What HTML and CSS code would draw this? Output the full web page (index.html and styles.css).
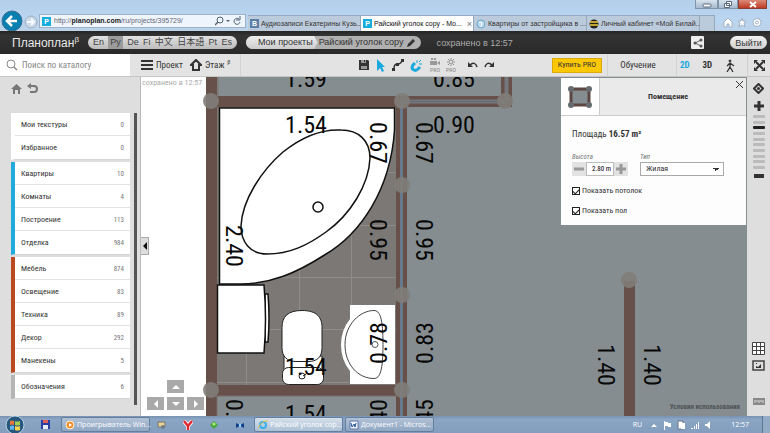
FILE: index.html
```html
<!DOCTYPE html>
<html lang="ru">
<head>
<meta charset="utf-8">
<title>Райский уголок copy</title>
<link rel="stylesheet" href="styles.css">
</head>
<body>
<div class="browser">
  <div class="titlebar">
    <button class="win" aria-label="Свернуть"><svg width="21" height="9"><rect x="7" y="4" width="8" height="3" rx="1" fill="#fff" stroke="#58697d"/></svg></button>
    <button class="win" aria-label="Окно"><svg width="18" height="9"><path d="M7.500 1.500h5v4h-5z M5.500 3.500h5v4h-5z" fill="#fff" stroke="#58697d"/></svg></button>
    <button class="win win-close" aria-label="Закрыть"><svg width="27" height="9"><path d="M11 2l6 5M17 2l-6 5" stroke="#fff" stroke-width="2"/></svg></button>
  </div>
  <div class="navrow">
    <button class="back" aria-label="Назад"><svg width="22" height="22" viewBox="0 0 22 22"><circle cx="11" cy="11" r="10" fill="#087fae" stroke="#386d95"/><path d="M16 11H7M11 6l-5 5 5 5" fill="none" stroke="#fff" stroke-width="2.500"/></svg></button>
    <button class="forward" aria-label="Вперёд"><svg width="14" height="14" viewBox="0 0 14 14"><circle cx="7" cy="7" r="6" fill="#c9d9ea" stroke="#9daec1"/><path d="M3 7h7M7 4l3 3-3 3" fill="none" stroke="#f7fbff" stroke-width="2"/></svg></button>
    <div class="address"><span class="fav">P</span><span class="url">http://<b>planoplan.com</b>/ru/projects/395729/</span>
      <svg width="27" height="10" viewBox="0 0 27 10"><circle cx="5" cy="4" r="3" fill="none" stroke="#4e6073"/><path d="M3 6L0 9" stroke="#4e6073" stroke-width="1.500"/><path d="M11 4h4l-2 2z" fill="#4e6073"/><path d="M24 3a3 3 0 1 0 1 3M25 0v4h-4" fill="none" stroke="#4e6073"/></svg>
    </div>
    <nav class="tabs">
      <a class="tab" href="#"><span class="fav fav-b">B</span><span class="tab-name">Аудиозаписи Екатерины Кузь...</span></a>
      <a class="tab tab-on" href="#"><span class="fav">P</span><span class="tab-name">Райский уголок copy - Mo...</span><span class="x">×</span></a>
      <a class="tab" href="#"><svg width="10" height="10"><circle cx="5" cy="5" r="4" fill="#b8d8ee" stroke="#6da8cf"/><path d="M3 3l3 1-1 4" stroke="#fff" fill="none"/></svg><span class="tab-name">Квартиры от застройщика в ...</span></a>
      <a class="tab" href="#"><svg width="10" height="10"><circle cx="5" cy="5" r="4.500" fill="#222"/><path d="M1 3h8M1 6h8" stroke="#f3cf38" stroke-width="1.500"/></svg><span class="tab-name">Личный кабинет «Мой Билай...</span></a>
      <span class="newtab"></span>
    </nav>
    <div class="chrome-icons">
      <svg width="40" height="11" viewBox="0 0 40 11" fill="#fff" stroke="#a2b2c4"><path d="M1 5l4-4 4 4v5H6V7H4v3H1z"/><path d="M19 1l1 3h3l-2 2 1 4-3-2-3 2 1-4-2-2h3z"/><circle cx="34" cy="5.500" r="4"/><circle cx="34" cy="5.500" r="1.500"/></svg>
    </div>
  </div>
</div>

<header class="header">
  <a class="logo" href="#">Планоплан<sup>β</sup></a>
  <nav class="langs"><a href="#">En</a><a class="lang-on" href="#">Ру</a><a href="#">De</a><a href="#">Fi</a><a href="#">中文</a><a href="#">日本語</a><a href="#">Pt</a><a href="#">Es</a></nav>
  <nav class="crumbs"><a class="crumb" href="#">Мои проекты</a><a class="crumb-now" href="#">Райский уголок copy <svg width="8" height="8"><path d="M0 8l1-3 5-5 2 2-5 5z" fill="#333"/></svg></a></nav>
  <span class="saved">сохранено в 12:57</span>
  <button class="share" aria-label="Поделиться"><svg width="12" height="12"><path d="M9 3L3 6l6 3" fill="none" stroke="#666"/><circle cx="9" cy="3" r="1.500" fill="#555"/><circle cx="3" cy="6" r="1.500" fill="#555"/><circle cx="9" cy="9" r="1.500" fill="#555"/></svg></button>
  <button class="exit">Выйти</button>
</header>

<div class="toolbar">
  <label class="search"><svg width="12" height="12" viewBox="0 0 12 12" fill="none" stroke="#888"><circle cx="5" cy="5" r="4"/><path d="M8 8l3 3" stroke-width="1.500"/></svg><input type="text" placeholder="Поиск по каталогу" aria-label="Поиск по каталогу"></label>
  <div class="tools">
    <button class="tool"><svg width="12" height="12"><path d="M0 2h12M0 6h12M0 10h12" stroke="#333" stroke-width="2"/></svg>Проект</button>
    <button class="tool floor"><svg width="12" height="12"><path d="M6 1L1 6h2v5h6V6h2z" fill="none" stroke="#333" stroke-width="2"/></svg>Этаж<sup>β</sup></button>
    <span class="line"></span>
    <div class="icons">
      <button aria-label="Сохранить"><svg width="12" height="12"><path d="M1 1h9l1 1v9H1z" fill="#333"/><path d="M3 1h5v3H3zM3 7h6v3H3z" fill="#999"/><path d="M6 1h1v2H6z" fill="#333"/></svg></button>
      <button aria-label="Выбор"><svg width="10" height="13"><path d="M1 0l8 8H6l2 4-2 1-2-4-3 3z" fill="#19a9df"/></svg></button>
      <button aria-label="Стена"><svg width="12" height="12"><path d="M2 10C2 5 4 5 6 5s3-1 4-3" fill="none" stroke="#333" stroke-width="1.500"/><path d="M0 9h3v3H0zM4 4h3v3H4zM9 0h3v3H9z" fill="#333"/></svg></button>
      <button aria-label="Магнит"><svg width="13" height="13"><path d="M5 4L3 6c-3 4 2 7 5 4l2-2" fill="none" stroke="#19a9df" stroke-width="3"/><path d="M7 1v3M9 5h3M9 3l2-2" stroke="#19a9df"/></svg></button>
      <button class="pro" aria-label="Видео PRO"><svg width="12" height="8"><path d="M1 3h7v4H1zM8 5l3-2v4zM2 0h2v2H2zM5 0h2v2H5z" fill="#999"/></svg>PRO</button>
      <button class="pro" aria-label="Свет PRO"><svg width="12" height="8"><circle cx="6" cy="4" r="2" fill="none" stroke="#888"/><path d="M6 0v1M6 7v1M2 4h1M9 4h1M3 1l1 1M9 1L8 2M3 7l1-1M9 7L8 6" stroke="#888"/></svg>PRO</button>
      <button class="undo" aria-label="Отменить"><svg width="10" height="8"><path d="M0 1v5h5z" fill="#333"/><path d="M2 4c3-3 6-2 7 2" fill="none" stroke="#333" stroke-width="1.500"/></svg></button>
      <button aria-label="Вернуть"><svg width="10" height="8"><path d="M10 1v5H5z" fill="#333"/><path d="M8 4C5 1 2 2 1 6" fill="none" stroke="#333" stroke-width="1.500"/></svg></button>
    </div>
    <button class="buy">Купить PRO</button>
    <a class="learn" href="#">Обучение</a>
    <div class="views"><button class="view view-on">2D</button><button class="view">3D</button><button class="view" aria-label="Прогулка"><svg width="10" height="13" fill="none" stroke="#333"><circle cx="5" cy="2" r="1" fill="#333"/><path d="M5 4v4l-3 5M5 8l3 5M5 4L2 7M5 4l4 3" stroke-width="1.300"/></svg></button></div>
  </div>
  <button class="expand" aria-label="На весь экран"><svg width="11" height="11"><path d="M2 2l7 7M9 2L2 9" stroke="#333" stroke-width="2"/><path d="M0 0h4L0 4zM11 0v4L7 0zM0 11V7l4 4zM11 11H7l4-4z" fill="#333"/></svg></button>
</div>

<main class="main">
  <aside class="sidebar">
    <div class="side-nav">
      <button aria-label="Домой"><svg width="11" height="11"><path d="M0 6l5.500-5L11 6H9v5H7V7H4v4H2V6z" fill="#777"/></svg></button>
      <button aria-label="Назад"><svg width="11" height="11"><path d="M2 3h5c4 0 4 6 0 6H3" fill="none" stroke="#777" stroke-width="2"/><path d="M0 3l4-3v6z" fill="#777"/></svg></button>
    </div>
    <div class="catalog">
      <div class="groups">
        <div class="group"><a href="#">Мои текстуры<span>0</span></a><a href="#">Избранное<span>0</span></a></div>
        <div class="group blue"><a href="#">Квартиры<span>10</span></a><a href="#">Комнаты<span>4</span></a><a href="#">Построение<span>113</span></a><a href="#">Отделка<span>984</span></a></div>
        <div class="group rust"><a href="#">Мебель<span>874</span></a><a href="#">Освещение<span>83</span></a><a href="#">Техника<span>89</span></a><a href="#">Декор<span>292</span></a><a href="#">Манекены<span>5</span></a></div>
        <div class="group gray"><a href="#">Обозначения<span>6</span></a></div>
      </div>
      <div class="scroll"></div>
    </div>
  </aside>

  <section class="plan">
    <svg class="drawing" viewBox="141 77 606 339" preserveAspectRatio="xMinYMin slice">
      <path d="M206 77h900v700H206z" fill="#858d90"/>
      <path d="M217 107h179v278H217z" fill="#7b7875"/>
      <path d="M217 277.500h179M217 329.500h179M217 382.500h179M350 225.500h46M370 172.500h26M299.500 270v59M351.500 225v104M246.500 329v56" stroke="#8f8c89" fill="none"/>
      <path d="M211.500 77v339M206 101.500h302M401.500 101v315M206 390.500h196M506.500 77v30" stroke="#67504a" stroke-width="11" fill="none"/>
      <path d="M217 416V396h179M218 96V77" stroke="#796d69" fill="none"/>
      <path d="M401 101.500h105M506.500 77v24" stroke="#75777c" stroke-width="4" fill="none"/>
      <path d="M401.500 101v315" stroke="#6d7580" stroke-width="3" fill="none"/>
      <path d="M401 101.500h105" stroke="#5f6c78" fill="none"/>
      <path d="M401.500 102v314" stroke="#5b80a0" fill="none"/>
      <g fill="#817d79" fill-opacity=".9"><circle cx="211" cy="101" r="8"/><circle cx="402" cy="101" r="8"/><circle cx="505" cy="101" r="8"/><circle cx="402" cy="185" r="8"/><circle cx="402" cy="295" r="8"/><circle cx="211" cy="390" r="8"/><circle cx="402" cy="390" r="8"/></g>
      <path d="M629.500 281v135" stroke="#67504a" stroke-width="11"/><circle cx="629" cy="280" r="8" fill="#817d79" fill-opacity=".9"/>
      <g fill="#fff" stroke="#111" stroke-width="1.500">
        <path d="M219.500 108h175v22c-4 60-34 104-70 125-28 18-54 29-84 29h-21z"/>
        <path d="M341 130c18 0 29 11 29 28-1 27-20 57-44 74-18 13-36 22-59 22-17 0-26-12-26-28 1-26 21-56 42-74 20-16 39-23 58-22z"/>
        <circle cx="318" cy="207" r="5"/>
        <path d="M265 294h3q2 24 0 48h-3z"/>
        <path d="M217.500 285H264q3 34 0 68h-46.500z"/>
      </g>
      <g fill="#fff" stroke="#222">
        <path d="M284 356h38v18h-38z"/><rect x="282.500" y="367.500" width="41" height="17" rx="6"/>
        <path d="M302 310.500c15 0 20 7 20 17v20c0 10-5 14-14 14h-12c-9 0-14-5-14-14v-20c0-11 6-17 20-17z"/>
        <circle cx="302" cy="376" r="3"/><path d="M303 376l3-2"/>
      </g>
      <path d="M350 305h45v79h-45v-13q-9-11-9-26t9-26z" fill="#fff"/>
      <path d="M374 310.500c6 0 9 8 9 34s-3 34-9 34c-16 0-29-14-29-34s15-34 29-34z" fill="none" stroke="#444"/><circle cx="375" cy="344.500" r="3" fill="none" stroke="#555"/>
      <g class="dims">
        <text x="306" y="87">1.59</text><text x="454" y="87">0.85</text>
        <text x="306" y="133">1.54</text><text x="454" y="133">0.90</text>
        <text x="306" y="375">1.54</text><text x="306" y="422">1.54</text>
        <text transform="translate(370 143) rotate(90)">0.67</text><text transform="translate(416 143) rotate(90)">0.67</text>
        <text transform="translate(370 240) rotate(90)">0.95</text><text transform="translate(416 240) rotate(90)">0.95</text>
        <text transform="translate(226 246) rotate(90)">2.40</text><text transform="translate(226 420) rotate(90)">0.70</text>
        <text transform="translate(387 343) rotate(-90)">0.78</text><text transform="translate(433 343) rotate(-90)">0.83</text>
        <text transform="translate(387 420) rotate(-90)">1.40</text><text transform="translate(433 420) rotate(-90)">1.45</text>
        <text transform="translate(598 365) rotate(90)">1.40</text><text transform="translate(644 365) rotate(90)">1.40</text>
      </g>
    </svg>
    <span class="plan-saved">сохранено в 12:57</span>
    <button class="collapse" aria-label="Свернуть каталог"><svg width="8" height="8"><path d="M6 0v8L2 4z" fill="#111"/></svg></button>
    <div class="pan">
      <button class="pan-up" aria-label="Вверх"><svg width="8" height="8"><path d="M0 6l4-4 4 4z" fill="#fff"/></svg></button>
      <button aria-label="Влево"><svg width="8" height="8"><path d="M6 0v8L2 4z" fill="#fff"/></svg></button>
      <button aria-label="Вниз"><svg width="8" height="8"><path d="M0 2l4 4 4-4z" fill="#fff"/></svg></button>
      <button aria-label="Вправо"><svg width="8" height="8"><path d="M2 0v8l4-4z" fill="#fff"/></svg></button>
    </div>
    <a class="terms" href="#">Условия использования</a>
    <form class="panel">
      <div class="panel-head">
        <div class="thumb"><svg width="26" height="24"><rect x="4" y="4" width="18" height="16" fill="#858d90" stroke="#5b4641" stroke-width="3"/><g fill="#666b6f"><circle cx="4" cy="4" r="3"/><circle cx="22" cy="4" r="3"/><circle cx="4" cy="20" r="3"/><circle cx="22" cy="20" r="3"/></g></svg></div>
        <h2>Помещение</h2>
        <button type="button" class="close" aria-label="Закрыть"><svg width="9" height="9"><path d="M1 1l7 7M8 1L1 8" stroke="#333"/></svg></button>
      </div>
      <div class="panel-body">
        <p class="area">Площадь <b>16.57 m²</b></p>
        <div class="fields">
          <div><label class="cap" for="h">Высота</label><div class="stepper"><button type="button" aria-label="Меньше"><svg width="10" height="10"><path d="M0 5h10" stroke="#999" stroke-width="3"/></svg></button><input id="h" type="text" value="2.80 m"><button type="button" aria-label="Больше"><svg width="10" height="10"><path d="M0 5h10M5 0v10" stroke="#999" stroke-width="3"/></svg></button></div></div>
          <div class="type"><label class="cap" for="t">Тип</label><select id="t"><option>Жилая</option></select></div>
        </div>
        <label class="check"><input type="checkbox" checked>Показать потолок</label>
        <label class="check"><input type="checkbox" checked>Показать пол</label>
      </div>
    </form>
  </section>

  <aside class="rail">
    <button aria-label="Центрировать"><svg width="11" height="11"><path d="M5.500 1L10 5.500 5.500 10 1 5.500z" fill="none" stroke="#333" stroke-width="2"/><circle cx="5.500" cy="5.500" r="1.500" fill="#333"/></svg></button>
    <button class="plus" aria-label="Приблизить"><svg width="10" height="10"><path d="M0 5h10M5 0v10" stroke="#333" stroke-width="3"/></svg></button>
    <div class="levels"><i></i><i></i><i class="now"></i><i></i><i></i><i></i><i></i><i></i><i></i><i></i></div>
    <button class="minus" aria-label="Отдалить"><svg width="10" height="4"><path d="M0 2h10" stroke="#333" stroke-width="4"/></svg></button>
    <span class="grow"></span>
    <button aria-label="Сетка"><svg width="13" height="13"><path d="M.5.500h12v12H.5zM4.500 0v13M8.500 0v13M0 4.500h13M0 8.500h13" fill="#fff" stroke="#444"/></svg></button>
    <button class="pic" aria-label="Картинка"><svg width="13" height="11"><path d="M1 1h11v9H1z" fill="none" stroke="#444" stroke-width="1.500"/><path d="M4 8V6l2 1 3-3v4zM4 3h1v1H4z" fill="#333"/></svg></button>
    <button class="units" aria-label="Единицы"><svg width="12" height="7"><path d="M0 0h12v7H0z" fill="#888"/><path d="M2 2v3M4 2v2M6 2v3M8 2v2M10 2v3" stroke="#ddd"/></svg></button>
  </aside>
</main>

<footer class="taskbar">
  <button class="start" aria-label="Пуск"><svg width="20" height="17"><circle cx="10" cy="9" r="9" fill="#28577e" stroke="#b9d4e8"/><path d="M5 5q2-1 4 0v4q-2-1-4 0z" fill="#e8763c"/><path d="M10 5q2 1 5 0v4q-3 1-5 0z" fill="#a5cf52"/><path d="M5 10q2-1 4 0v4q-2-1-4 0z" fill="#62b7ed"/><path d="M10 10q2 1 5 0v4q-3 1-5 0z" fill="#f7d64e"/></svg></button>
  <svg class="floppy" width="9" height="9"><path d="M0 0h9v9H0z" fill="#273fa0"/><path d="M2 0h5v3H2z" fill="#e2605c"/><path d="M2 5h5v4H2z" fill="#e9edfa"/></svg>
  <button class="task"><svg width="10" height="10"><circle cx="5" cy="5" r="4" fill="#f38b26" stroke="#fff3dc"/><path d="M4 3l3 2-3 2z" fill="#fff"/></svg><span>Проигрыватель Win...</span></button>
  <div class="pins">
    <svg width="10" height="10"><path d="M1 2h7v5H1z" fill="#e9d294" stroke="#77746a"/><circle cx="6" cy="7" r="2" fill="#727c8b"/></svg>
    <svg width="10" height="10"><path d="M1 1l4 5 4-5M5 5v5" fill="none" stroke="#fff" stroke-width="4"/><path d="M1 1l4 5 4-5M5 5v5" fill="none" stroke="#e02b34" stroke-width="2.500"/></svg>
    <svg width="10" height="10"><path d="M5 1l4 4-4 4-4-4z" fill="#46a93e"/><circle cx="5" cy="4" r="1.500" fill="#b9ed77"/></svg>
    <svg width="10" height="10"><path d="M1 3l4 2 4-2v5L5 6 1 8z" fill="#173f8c"/><path d="M4 4h2v3H4z" fill="#8ed3ff"/></svg>
  </div>
  <button class="task task-on"><svg width="10" height="10"><circle cx="5" cy="5" r="3" fill="none" stroke="#38aeea" stroke-width="2"/><path d="M0 8Q4 0 10 1" stroke="#e2c344" fill="none"/></svg><span>Райский уголок cop...</span></button>
  <button class="task"><svg width="10" height="10"><path d="M1 1h8v8H1z" fill="#f4f7ff" stroke="#5874a8"/><path d="M2 3l1 4 2-3 1 3 1-4" stroke="#254f9c" fill="none"/></svg><span>Документ1 - Micros...</span></button>
  <span class="grow"></span>
  <span class="ru">RU</span>
  <svg class="tray" width="62" height="10" fill="#fff"><path d="M0 7l3-3 3 3zM13 1h1v9h-1zM14 2h3v1h3v4h-3V6h-3z"/><path d="M27 1h5v8h-5z" stroke="#60758e"/><path d="M30 3h4v6h-4z"/><path d="M40 8h2v1h-2zM43 6h1v3h-1zM45 4h1v5h-1zM47 2h1v7h-1z"/><path d="M54 4h2l3-3v8l-3-3h-2z"/></svg>
  <time class="clock">12:57</time>
  <span class="desk"></span>
</footer>
</body>
</html>
```
FILE: styles.css
```css
* { box-sizing: border-box; }
html, body { height: 100%; }
body {
  margin: 0;
  display: grid;
  grid-template-rows: 31px 23px 23px minmax(0, 1fr) 17px;
  grid-template-columns: minmax(0, 1fr);
  font-family: "Roboto Condensed", Roboto, "Liberation Sans", sans-serif;
  font-size: 8px;
  line-height: 10px;
  color: #333;
  background: #ddd;
  overflow: hidden;
}
a { color: inherit; text-decoration: none; }
button { border: 0; padding: 0; margin: 0; background: none; font: inherit; color: inherit; display: flex; align-items: center; justify-content: center; }
svg { display: block; flex: none; }
sup { font-size: 6px; line-height: 6px; vertical-align: top; }
.grow { flex: 1; }

.browser { background: linear-gradient(#b3cfea, #b9d5f1 60%, #bdd3e9); font-family: "Open Sans", "Liberation Sans", sans-serif; font-size: 7px; }
.titlebar { height: 10px; display: flex; justify-content: flex-end; padding-right: 3px; }
.win { height: 9px; border: 1px solid #8294a8; border-top: 0; background: linear-gradient(#d7e2ee, #a7bacf); }
.win-close { background: linear-gradient(#dc8a77, #bd3a24); border-color: #873f35; }
.navrow { display: flex; height: 21px; align-items: flex-end; }
.back { margin-left: 1px; height: 21px; }
.forward { margin-left: 1px; height: 19px; }
.address { display: flex; align-items: center; width: 207px; height: 14px; margin: 0 2px 3px 1px; padding: 0 3px 0 2px; background: #eef5fc; border: 1px solid #9fb1c4; gap: 3px; color: #667; font-family: "Liberation Sans", sans-serif; }
.address svg { margin-left: auto; }
.url { white-space: nowrap; }
.url b { color: #222; }
.fav { width: 9px; height: 9px; background: #18aedb; color: #fff; font-weight: bold; text-align: center; line-height: 9px; flex: none; }
.fav-b { background: #5b7fa6; }
.tabs { display: flex; flex: 1; min-width: 0; height: 16px; font-family: "Liberation Sans", sans-serif; }
.tab { flex: 1; min-width: 0; display: flex; align-items: center; gap: 2px; padding: 0 1px 0 2px; background: #bccbdb; border: 1px solid #94a8be; border-bottom: 0; border-left: 0; color: #333; }
.tab-name { flex: 1; white-space: nowrap; }
.tab-on { background: #fdfdfe; color: #111; }
.x { color: #777; font-size: 9px; }
.newtab { width: 15px; background: #bccbdb; border: 1px solid #94a8be; border-left: 0; border-bottom: 0; }
.chrome-icons { width: 55px; display: flex; justify-content: center; padding-bottom: 3px; }

.header { display: flex; align-items: center; padding: 0 8px 0 12px; background: linear-gradient(#252525, #343434 20%, #292929); font-family: "Liberation Sans", "Noto Sans CJK JP", sans-serif; font-size: 9px; }
.logo { width: 76px; font-size: 12px; line-height: 14px; color: #e8e8e8; white-space: nowrap; }
.logo sup { font-size: 8px; line-height: 8px; }
.langs { display: flex; justify-content: space-between; width: 149px; height: 13px; padding: 0 5px; border-radius: 7px; background: linear-gradient(#e2e2e2, #bcbcbc); color: #444; line-height: 13px; white-space: nowrap; }
.lang-on { background: #9c9c9c; padding: 0 2px; }
.crumbs { display: flex; height: 13px; margin-left: 9px; border-radius: 7px; background: #b0b0b0; overflow: hidden; line-height: 13px; white-space: nowrap; }
.crumb { padding: 0 5px 0 12px; background: linear-gradient(#eee, #ccc); clip-path: polygon(0 0, 95% 0, 100% 50%, 95% 100%, 0 100%); }
.crumb-now { display: flex; align-items: center; gap: 3px; padding: 0 6px 0 1px; }
.saved { margin-left: 16px; color: #aaa; }
.share { margin-left: auto; width: 13px; height: 13px; border-radius: 1px; background: #eee; }
.exit { margin: 0 -5px 0 26px; width: 37px; height: 13px; border-radius: 7px; background: linear-gradient(#f2f2f2, #cfcfcf); }

.toolbar { display: grid; grid-template-columns: 141px minmax(0, 1fr) 23px; background: #e3e3e3; border-bottom: 1px solid #c6c6c6; }
.search { display: flex; align-items: center; gap: 4px; width: 130px; padding-left: 6px; background: #fff; }
.search input { flex: 1; min-width: 0; border: 0; padding: 0; outline: 0; font: inherit; font-size: 9px; background: none; }
.search input::placeholder { color: #888; opacity: 1; }
.tools { display: flex; align-items: center; min-width: 0; font-size: 9px; }
.tool { gap: 3px; width: 43px; white-space: nowrap; justify-content: flex-start; }
.floor { margin-left: 6px; width: 50px; }
.floor sup { align-self: flex-start; }
.line { height: 22px; border-left: 1px solid #d3d3d3; }
.icons { display: flex; align-items: center; gap: 6px; margin: 0 auto; padding-left: 59px; }
.pro { flex-direction: column; font-size: 6px; line-height: 6px; color: #888; width: 12px; gap: 1px; }
.pro + .pro { margin-left: -2px; }
.undo { margin-left: 5px; }
.buy { width: 50px; height: 15px; background: #fcc704; border: 1px solid #dca90a; font-size: 8px; }
.learn { width: 70px; margin-left: 5px; padding-right: 8px; text-align: center; line-height: 22px; border: solid #d3d3d3; border-width: 0 1px; }
.views { display: flex; width: 70px; padding: 0 12px 0 3px; justify-content: space-between; font-weight: bold; }
.view-on { color: #19a9df; }
.expand { border-left: 1px solid #cfcfcf; }

.main { display: grid; grid-template-columns: 141px minmax(0, 1fr) 23px; min-height: 0; }
.sidebar { display: flex; flex-direction: column; background: #dedede; border-right: 1px solid #bbb; min-height: 0; }
.side-nav { display: flex; gap: 5px; height: 36px; padding: 6px 0 0 11px; align-items: flex-start; flex: none; }
.catalog { display: flex; gap: 4px; flex: 1; padding: 0 3px 11px 11px; min-height: 0; }
.groups { flex: 1; display: flex; flex-direction: column; gap: 2px; }
.group { background: #fff; border-left: 4px solid #fff; border-bottom: 1px solid #d4d4d4; }
.group a { display: flex; justify-content: space-between; align-items: center; height: 23px; padding: 1px 6px 0; border-bottom: 1px solid #e2e2e2; }
.group a:last-child { border-bottom: 0; }
.group span { font-size: 7px; color: #777; }
.group.blue { border-left-color: #20aadb; }
.group.rust { border-left-color: #b9491f; }
.group.gray { border-left-color: #b5b5b5; }
.scroll { width: 3px; background: #555; }

.plan { position: relative; background: #fff; overflow: hidden; min-width: 0; }
.drawing { width: 100%; height: 100%; }
.dims { font-size: 24px; fill: #080808; text-anchor: middle; }
.plan-saved { position: absolute; left: 1px; top: 1px; color: #aaa; }
.collapse { position: absolute; left: 0; top: 160px; width: 8px; height: 18px; background: #ddd; border: 1px solid #aaa; border-left: 0; }
.pan { position: absolute; left: 6px; bottom: 6px; display: grid; grid-template-columns: repeat(3, 17px); gap: 4px 3px; }
.pan button { height: 13px; background: #a9a9a9; }
.pan .pan-up { grid-column: 2; }
.pan-up + button { grid-column: 1; }
.terms { position: absolute; right: 7px; bottom: 4px; font-size: 7px; font-weight: bold; color: #505456; }

.panel { position: absolute; right: 1px; top: 1px; width: 185px; background: #fdfdfd; }
.panel-head { display: flex; height: 38px; background: #eaeaea; border-bottom: 1px solid #ccc; }
.thumb { width: 39px; display: flex; align-items: center; justify-content: center; background: #fff; border-right: 1px solid #ccc; }
.panel h2 { flex: 1; margin: 0; padding-left: 4px; text-align: center; font-size: 8px; line-height: 37px; }
.close { width: 14px; height: 13px; }
.panel-body { padding: 12px 11px 9px; }
.area { margin: 0 0 12px; font-size: 9px; line-height: 12px; }
.fields { display: flex; gap: 12px; margin-bottom: 10px; }
.cap { display: block; font-size: 7px; line-height: 10px; color: #777; font-style: italic; }
.stepper { display: flex; height: 14px; }
.stepper button { width: 14px; background: #e2e2e2; }
.stepper input { width: 28px; padding: 0 2px; border: 1px solid #bbb; background: #fff; font: inherit; font-size: 7px; text-align: right; }
.type { flex: none; width: 84px; }
.type select { appearance: none; width: 100%; height: 14px; padding: 0 5px; border: 1px solid #aaa; border-radius: 0; font: inherit; color: #333; background: linear-gradient(45deg, transparent 50%, #333 50%) right 7px center / 3px 3px no-repeat, linear-gradient(-45deg, transparent 50%, #333 50%) right 4px center / 3px 3px no-repeat, #fff; }
.check { display: flex; align-items: center; gap: 2px; height: 10px; margin-bottom: 10px; white-space: nowrap; }
.check:last-child { margin-bottom: 0; }
.check input { appearance: none; margin: 0; width: 8px; height: 8px; border: 1px solid #222; display: grid; place-items: center; background: #fff; }
.check input:checked::after { content: ""; width: 5px; height: 3px; border: solid #222; border-width: 0 0 1px 1px; transform: rotate(-45deg); }

.rail { display: flex; flex-direction: column; align-items: center; padding: 6px 0 11px; background: #dedede; min-height: 0; }
.plus { margin-top: 7px; }
.levels { display: grid; height: 54px; align-content: space-between; margin-top: 4px; }
.levels i { width: 12px; height: 3px; background: #bbb; border-radius: 1px; }
.levels .now { background: #222; }
.minus { margin-top: 5px; }
.pic { margin-top: 5px; }
.units { margin-top: 27px; }

.taskbar { display: flex; align-items: center; background: linear-gradient(#7992b2, #8ba5c4 20%, #829dbd); font-family: "Open Sans", "Liberation Sans", sans-serif; font-size: 7px; color: #fff; }
.start { width: 20px; margin-left: 5px; }
.floppy { margin: 0 11px 0 16px; }
.task { width: 89px; height: 15px; justify-content: flex-start; gap: 2px; padding: 0 3px; border: 1px solid #657f9f; border-radius: 2px; background: linear-gradient(#b2c2d6, #8fa7c3); white-space: nowrap; margin-right: 2px; }
.task-on { background: linear-gradient(#d6e0eb, #adc0d5); }
.pins { display: flex; justify-content: space-between; width: 88px; margin: 0 9px 0 5px; }
.ru { margin-right: 9px; }
.tray { margin-right: 18px; }
.clock { margin-right: 13px; }
.desk { width: 8px; height: 17px; background: #94abc6; border-left: 1px solid #5f7896; }
```
